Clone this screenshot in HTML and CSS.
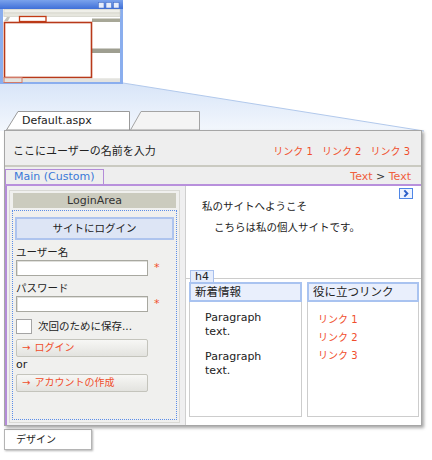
FILE: index.html
```html
<!DOCTYPE html>
<html lang="ja">
<head>
<meta charset="utf-8">
<title>Default.aspx デザイン</title>
<link rel="stylesheet" href="styles.css">
</head>
<body>
<div class="page">
  <svg class="backdrop" width="432" height="132" viewBox="0 0 432 132">
    <defs>
      <linearGradient id="persp" x1="0" y1="0" x2="0" y2="1">
        <stop offset="0" stop-color="#d8e5f8"/>
        <stop offset="1" stop-color="#f3f7fd"/>
      </linearGradient>
      <linearGradient id="ttl" x1="0" y1="0" x2="0" y2="1">
        <stop offset="0" stop-color="#7aa2ec"/>
        <stop offset="1" stop-color="#3f70d8"/>
      </linearGradient>
    </defs>
    <polygon points="0,83 123,83 424,131 0,131" fill="url(#persp)"/>
    <line x1="123" y1="83" x2="424" y2="131" stroke="#b2c9ec" stroke-width="1"/>
    <rect x="0" y="0" width="123" height="84" fill="#8aaeee"/>
    <rect x="0" y="0" width="123" height="9" fill="url(#ttl)"/>
    <rect x="98.5" y="2.5" width="5.5" height="5.5" fill="#e6edfb" stroke="#3d66c0" stroke-width="0.5"/>
    <rect x="106" y="2.5" width="5.5" height="5.5" fill="#e6edfb" stroke="#3d66c0" stroke-width="0.5"/>
    <rect x="113.5" y="2.5" width="5.5" height="5.5" fill="#e6edfb" stroke="#3d66c0" stroke-width="0.5"/>
    <rect x="3" y="9" width="117" height="73" fill="#f0f0ec"/>
    <rect x="4" y="9.5" width="116" height="3.5" fill="#efefe9" stroke="#c9c9c0" stroke-width="0.5"/>
    <rect x="4" y="13" width="116" height="3.5" fill="#e6e6de" stroke="#c9c9c0" stroke-width="0.5"/>
    <rect x="3" y="17" width="117" height="61" fill="#ffffff"/>
    <polygon points="4,21 7,17 10,17 8,21" fill="#c4c4bc"/>
    <rect x="92" y="18.5" width="28" height="3.5" fill="#a7a797"/>
    <rect x="92" y="48.5" width="28" height="4.5" fill="#9e9e90"/>
    <rect x="19.5" y="16.5" width="26.5" height="5" fill="#ffffff" stroke="#c23a14" stroke-width="1.3"/>
    <rect x="4.5" y="22.5" width="87" height="55" fill="#ffffff" stroke="#b8391a" stroke-width="1.6"/>
    <rect x="3" y="78.5" width="117" height="3.5" fill="#e3e3df"/>
    <rect x="4" y="77.5" width="18" height="5" fill="none" stroke="#d27a68" stroke-width="1"/>
  </svg>

  <div class="tabs">
    <div class="tab tab-active">
      <svg class="tab-shape" width="124" height="19" viewBox="0 0 124 19"><polygon points="0.5,19 12,0.5 123.5,0.5 123.5,19" fill="#ffffff" stroke="#9a9a9a" stroke-width="1"/></svg>
      <span class="tab-label">Default.aspx</span>
    </div>
    <div class="tab tab-idle">
      <svg class="tab-shape" width="70" height="19" viewBox="0 0 70 19"><polygon points="0.5,19 11,0.5 69.5,0.5 69.5,19" fill="#f4f4f4" stroke="#a4a4a4" stroke-width="1"/></svg>
    </div>
  </div>

  <div class="panel">
    <div class="header">
      <span class="user">ここにユーザーの名前を入力</span>
      <span class="toplinks"><span>リンク 1</span><span>リンク 2</span><span>リンク 3</span></span>
    </div>
    <div class="nav">
      <span class="main-tab">Main (Custom)</span>
      <span class="crumbs"><span class="red">Text</span> &gt; <span class="red">Text</span></span>
    </div>
    <div class="content">
      <div class="leftcol">
        <div class="loginbox">
          <div class="login-head">LoginArea</div>
          <div class="login-area">
            <div class="login-title">サイトにログイン</div>
            <div class="label">ユーザー名</div>
            <div class="field-row"><span class="input"></span><span class="star">*</span></div>
            <div class="label">パスワード</div>
            <div class="field-row"><span class="input"></span><span class="star">*</span></div>
            <div class="check-row"><span class="checkbox"></span><span class="check-text">次回のために保存...</span></div>
            <div class="btn"><span class="arrow">→</span>ログイン</div>
            <div class="or">or</div>
            <div class="btn btn2"><span class="arrow">→</span>アカウントの作成</div>
          </div>
        </div>
      </div>
      <div class="rightcol">
        <div class="chev-row">
          <svg width="14" height="11" viewBox="0 0 14 11"><rect x="0.5" y="0.5" width="13" height="10" fill="#eef3fe" stroke="#4f86e6" stroke-width="1"/><path d="M5.3,2.4 L8.3,5.5 L5.3,8.6" fill="none" stroke="#2b5ec8" stroke-width="2"/></svg>
        </div>
        <div class="welcome">私のサイトへようこそ</div>
        <div class="welcome-sub">こちらは私の個人サイトです。</div>
        <div class="h4wrap">
          <div class="h4tab">h4</div>
          <div class="cols">
            <div class="col">
              <div class="col-head">新着情報</div>
              <div class="col-body news">
                <p>Paragraph text.</p>
                <p>Paragraph text.</p>
              </div>
            </div>
            <div class="col">
              <div class="col-head">役に立つリンク</div>
              <div class="col-body links">
                <div>リンク 1</div>
                <div>リンク 2</div>
                <div>リンク 3</div>
              </div>
            </div>
          </div>
        </div>
      </div>
    </div>
  </div>

  <div class="design-tab">デザイン</div>
</div>
</body>
</html>
```

FILE: styles.css
```css
* { box-sizing: border-box; margin: 0; padding: 0; }
html, body { width: 432px; height: 460px; background: #ffffff; overflow: hidden; }
body { font-family: "DejaVu Sans", "Noto Sans CJK JP", sans-serif; font-size: 11px; color: #222222; }

.page { position: relative; width: 432px; height: 460px; }
.backdrop { position: absolute; left: 0; top: 0; }

.tabs { position: relative; display: flex; height: 130px; padding: 111px 0 0 6px; }
.tab { position: relative; height: 19px; line-height: 19px; }
.tab-shape { position: absolute; left: 0; top: 0; }
.tab-label { position: relative; }
.tab-active { width: 124px; padding-left: 16px; }
.tab-idle { width: 70px; }

.panel {
  position: relative;
  display: flex;
  flex-direction: column;
  margin-left: 4px;
  width: 418px;
  height: 296px;
  border: 1px solid #a6a6a6;
  background: #eeeeee;
  box-shadow: 2px 2px 3px rgba(0, 0, 0, 0.35);
}

.header {
  height: 34px;
  display: flex;
  justify-content: space-between;
  align-items: flex-end;
  padding: 0 11px 6px 8px;
  line-height: 14px;
}
.user { font-size: 11px; }
.toplinks { display: flex; gap: 9px; font-size: 10px; color: #f04e2c; }

.nav {
  height: 21px;
  display: flex;
  justify-content: space-between;
  align-items: flex-end;
  border-top: 2px solid #cacac1;
  border-bottom: 2px solid #b890dc;
  padding-right: 10px;
}
.main-tab {
  height: 15px;
  line-height: 14px;
  padding: 0 6px 0 8px;
  border: 1px solid #b48cd8;
  border-bottom: none;
  color: #3a78d8;
  width: 99px;
}
.crumbs { line-height: 15px; color: #333333; }
.red { color: #f0603e; }

.content { flex: 1; display: flex; }

.leftcol {
  width: 181px;
  border-left: 2px solid #b48cd8;
  border-right: 1px solid #cfcfcf;
  background: #efeff0;
  padding: 4px 0 0 2px;
}
.loginbox {
  width: 171px;
  border: 1px solid #d9d9d5;
  background: #f0f0ee;
  padding: 2px;
}
.login-head {
  height: 15px;
  line-height: 15px;
  margin: 0 1px 2px 1px;
  background: #cbcbbe;
  text-align: center;
  color: #333333;
}
.login-area {
  height: 210px;
  border: 1px dotted #5b8de8;
  padding: 6px 1px 0 1px;
}
.login-title {
  height: 23px;
  line-height: 19px;
  margin: 0 1px;
  border: 2px solid #aec4ee;
  background: #dde5f5;
  text-align: center;
  font-size: 10.5px;
}
.label { margin-top: 4px; line-height: 16px; padding-left: 2px; font-size: 10.5px; }
.field-row { display: flex; align-items: center; height: 16px; padding-left: 2px; }
.input {
  width: 132px;
  height: 16px;
  border: 1px solid #a8a8a0;
  background: #ffffff;
  box-shadow: inset 1px 1px 0 #e0e0dc;
}
.star { margin-left: 6px; color: #f04e2c; font-size: 11px; line-height: 16px; }
.check-row { display: flex; align-items: center; margin-top: 7px; padding-left: 2px; height: 15px; }
.checkbox { width: 16px; height: 15px; border: 1px solid #a4a4a4; background: #ffffff; }
.check-text { margin-left: 6px; font-size: 10.5px; line-height: 15px; }
.btn {
  margin: 5px 0 0 2px;
  width: 132px;
  height: 18px;
  line-height: 16px;
  border: 1px solid #c4c4bc;
  border-radius: 2px;
  background: linear-gradient(#f7f7f5, #e3e3df);
  color: #f04e2c;
  font-size: 10px;
  padding-left: 5px;
}
.arrow { margin-right: 4px; }
.or { margin-top: 1px; line-height: 14px; padding-left: 2px; }
.btn2 { margin-top: 2px; }

.rightcol { flex: 1; background: #ffffff; padding-top: 2px; }
.chev-row { height: 11px; display: flex; justify-content: flex-end; padding-right: 8px; }
.chev-row svg { display: block; }
.welcome { padding-left: 16px; line-height: 14px; font-size: 10.5px; }
.welcome-sub { margin-top: 7px; padding-left: 28px; line-height: 14px; font-size: 10.5px; }

.h4wrap { margin-top: 36px; }
.h4tab {
  position: relative;
  z-index: 1;
  width: 24px;
  height: 12px;
  line-height: 12px;
  margin: 0 0 -4px 4px;
  padding-left: 4px;
  border: 1px solid #a8c0ee;
  border-bottom: none;
  background: #e6edfc;
}
.cols {
  display: flex;
  gap: 5px;
  border-top: 1px solid #cccccc;
  padding: 3px 0 0 3px;
}
.col { display: flex; flex-direction: column; }
.col:first-child { width: 113px; }
.col:last-child { width: 112px; }
.col-head {
  height: 20px;
  line-height: 16px;
  border: 2px solid #a9c3f0;
  background: #e9effc;
  padding-left: 4px;
  font-size: 11.5px;
}
.col-body {
  height: 115px;
  border: 1px solid #cdcdcd;
  border-top: none;
  padding-top: 9px;
}
.news { padding-left: 15px; }
.news p { width: 70px; line-height: 13.5px; }
.news p + p { margin-top: 12px; }
.links { padding-left: 10px; color: #f04e2c; font-size: 10px; line-height: 18px; }

.design-tab {
  margin: 3px 0 0 4px;
  width: 88px;
  height: 21px;
  line-height: 19px;
  border: 1px solid #b4b4b4;
  background: #ffffff;
  box-shadow: 1px 1px 2px rgba(0, 0, 0, 0.3);
  padding-left: 11px;
  font-size: 10px;
}
```
